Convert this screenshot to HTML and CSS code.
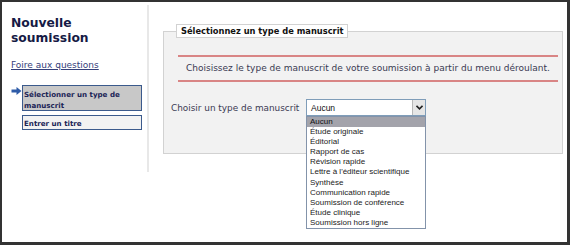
FILE: index.html
```html
<!DOCTYPE html>
<html lang="fr">
<head>
    <meta charset="UTF-8">
    <meta name="viewport" content="width=device-width, initial-scale=1.0">
    <title>Nouvelle soumission</title>
    <link rel="stylesheet" href="styles.css">
</head>
<body>
    <div class="frame">
        <div class="sidebar">
            <h1 class="title">Nouvelle soumission</h1>
            <a class="faq" href="#">Foire aux questions</a>
            <div class="steps">
                <div class="step current">
                    <svg class="arrow" width="10" height="8" viewBox="0 0 10 8">
                        <path d="M0 2.5 H5 V0 L10 4 L5 8 V5.5 H0 Z" fill="#2f5ca8"/>
                    </svg>
                    <div class="step-box active">Sélectionner un type de manuscrit</div>
                </div>
                <div class="step">
                    <div class="step-box">Entrer un titre</div>
                </div>
            </div>
        </div>

        <div class="main">
            <fieldset class="panel">
                <legend class="panel-title">Sélectionnez un type de manuscrit</legend>
                <div class="message">Choisissez le type de manuscrit de votre soumission à partir du menu déroulant.</div>
                <div class="field-row">
                    <label class="field-label">Choisir un type de manuscrit</label>
                    <div class="select-wrap">
                        <div class="select">
                            <span class="select-value">Aucun</span>
                            <span class="select-btn">
                                <svg width="7" height="5" viewBox="0 0 7 5">
                                    <path d="M0.5 0.8 L3.5 3.8 L6.5 0.8" fill="none" stroke="#222" stroke-width="1.6"/>
                                </svg>
                            </span>
                        </div>
                        <ul class="options">
                            <li class="option selected">Aucun</li>
                            <li class="option">Étude originale</li>
                            <li class="option">Éditorial</li>
                            <li class="option">Rapport de cas</li>
                            <li class="option">Révision rapide</li>
                            <li class="option">Lettre à l'éditeur scientifique</li>
                            <li class="option">Synthèse</li>
                            <li class="option">Communication rapide</li>
                            <li class="option">Soumission de conférence</li>
                            <li class="option">Étude clinique</li>
                            <li class="option">Soumission hors ligne</li>
                        </ul>
                    </div>
                </div>
            </fieldset>
        </div>
    </div>
</body>
</html>
```

FILE: styles.css
```css
body {
    margin: 0;
    background-color: #fff;
    font-family: "DejaVu Sans", Verdana, sans-serif;
}
.frame {
    box-sizing: border-box;
    width: 570px;
    height: 245px;
    border: 2px solid #333;
    border-right-width: 3px;
    border-bottom-width: 3px;
    display: flex;
    align-items: flex-start;
}
.sidebar {
    width: 136px;
    height: 156px;
    margin-top: 3px;
    padding: 11px 0 0 9px;
    border-right: 2px solid #e8e8e8;
}
.title {
    margin: 0;
    font-size: 12.3px;
    line-height: 14.5px;
    font-weight: bold;
    color: #161a45;
}
.faq {
    display: block;
    margin-top: 15px;
    font-size: 9px;
    line-height: 11px;
    color: #34407a;
}
.steps {
    margin-top: 14px;
}
.step {
    display: flex;
    align-items: flex-start;
    margin-bottom: 4px;
}
.arrow {
    margin-top: 2px;
    width: 11px;
    flex: none;
}
.step-box {
    box-sizing: border-box;
    width: 120px;
    margin-left: 11px;
    padding: 2px 1px 0 1px;
    border: 1px solid #3b5a8c;
    background-color: #f2f2f2;
    font-size: 7.1px;
    line-height: 11px;
    font-weight: bold;
    color: #1b2456;
}
.step.current .step-box {
    margin-left: 0;
}
.step-box.active {
    padding-top: 3px;
    height: 26px;
    background-color: #c8c8c8;
}
.main {
    flex: 1;
    padding-top: 22px;
}
.panel {
    box-sizing: border-box;
    width: 400px;
    margin: 0 0 0 14px;
    padding: 0 4px 37px 7px;
    border: 1px solid #d2d2d2;
    background-color: #f2f2f2;
}
.panel-title {
    margin-left: 5px;
    padding: 0 4px;
    border: 1px solid #d2d2d2;
    background-color: #fff;
    font-size: 8.3px;
    line-height: 12px;
    font-weight: bold;
    color: #111;
}
.message {
    margin: 17px 0 0 7px;
    padding-left: 8px;
    height: 23px;
    border-top: 2px solid #d98585;
    border-bottom: 2px solid #d98585;
    font-size: 9px;
    line-height: 23px;
    color: #3a3a52;
    white-space: nowrap;
}
.field-row {
    display: flex;
    align-items: center;
    margin-top: 17px;
}
.field-label {
    width: 135px;
    font-size: 8.9px;
    color: #3a3a52;
}
.select-wrap {
    position: relative;
    width: 120px;
}
.select {
    box-sizing: border-box;
    height: 17px;
    display: flex;
    align-items: center;
    justify-content: space-between;
    border: 1px solid #7f9db9;
    background-color: #fff;
    padding-left: 4px;
}
.select-value {
    font-family: "Liberation Sans", Arial, sans-serif;
    font-size: 8.5px;
    color: #111;
}
.select-btn {
    box-sizing: border-box;
    width: 13px;
    height: 15px;
    display: flex;
    align-items: center;
    justify-content: center;
    border-left: 1px solid #b8b8b8;
    background-color: #e6e6e6;
}
.options {
    position: absolute;
    top: 100%;
    left: 0;
    box-sizing: border-box;
    width: 120px;
    margin: 0;
    padding: 0;
    list-style: none;
    border: 1px solid #8393aa;
    background-color: #fff;
}
.option {
    height: 10.1px;
    padding-left: 3px;
    font-family: "Liberation Sans", Arial, sans-serif;
    font-size: 8px;
    line-height: 10px;
    color: #222;
    white-space: nowrap;
}
.option.selected {
    background-color: #a3a3ab;
    color: #111;
}
```
